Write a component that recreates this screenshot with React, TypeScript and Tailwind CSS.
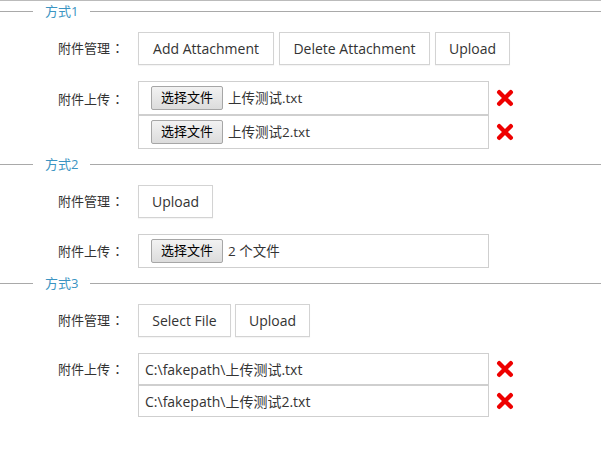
import React from "react";

const font = { fontFamily: '"Open Sans", "Noto Sans CJK SC", sans-serif' };

function Legend({ text }: { text: string }) {
  return (
    <div className="flex items-center h-5">
      <div className="w-[33px] h-px bg-[#a9a9a9]" />
      <div className="px-3 text-[13px] leading-5 text-[#3b94c2]">{text}</div>
      <div className="flex-1 h-px bg-[#a9a9a9]" />
    </div>
  );
}

function Label({ text }: { text: string }) {
  return (
    <div className="w-[138px] pl-[58px] text-[13px] text-[#333] whitespace-nowrap">
      {text}
      <span className="inline-block ml-[1px]" style={{ fontFamily: '"Noto Sans CJK JP", sans-serif' }}>
        ：
      </span>
    </div>
  );
}

function Btn({ text, w }: { text: string; w: string }) {
  return (
    <div
      className={`${w} h-[33px] flex items-center justify-center border border-[#d3d3d3] bg-white text-[14px] text-[#333] whitespace-nowrap shadow-[0_1px_1px_rgba(0,0,0,0.04)]`}
    >
      {text}
    </div>
  );
}

function XIcon() {
  return (
    <svg width="18" height="18" viewBox="0 0 18 18" className="ml-[7px]">
      <path d="M3.2 3.2 L14.8 14.8 M14.8 3.2 L3.2 14.8" stroke="#ee0000" strokeWidth="4.4" strokeLinecap="round" />
    </svg>
  );
}

function FileBox({ name, showX = true }: { name: string; showX?: boolean }) {
  return (
    <div className="flex items-center">
      <div className="w-[351px] h-[34px] border border-[#cfcfcf] flex items-center pl-[12px]">
        <div className="h-[24px] w-[72px] flex items-center justify-center border border-[#a6a6a6] rounded-[2px] bg-gradient-to-b from-[#f2f2f2] to-[#dcdcdc] text-[13px] text-black">
          选择文件
        </div>
        <div className="ml-[5px] text-[13.5px] text-[#333]">{name}</div>
      </div>
      {showX && <XIcon />}
    </div>
  );
}

function PathBox({ path }: { path: string }) {
  return (
    <div className="flex items-center">
      <div className="w-[351px] h-[32px] border border-[#cfcfcf] flex items-center pl-[6px] text-[14px] text-[#333]">
        {path}
      </div>
      <XIcon />
    </div>
  );
}

export default function App() {
  return (
    <div className="w-[601px] h-[462px] bg-white border-t border-[#bbbbbb] overflow-hidden" style={font}>
      <Legend text="方式1" />
      <div className="flex items-center mt-[11px]">
        <Label text="附件管理" />
        <div className="flex gap-[5px]">
          <Btn text="Add Attachment" w="w-[136px]" />
          <Btn text="Delete Attachment" w="w-[151px]" />
          <Btn text="Upload" w="w-[75px]" />
        </div>
      </div>
      <div className="flex mt-[16px]">
        <div className="pt-[8px]">
          <Label text="附件上传" />
        </div>
        <div className="flex flex-col">
          <FileBox name="上传测试.txt" />
          <FileBox name="上传测试2.txt" />
        </div>
      </div>
      <div className="mt-[5px]">
        <Legend text="方式2" />
      </div>
      <div className="flex items-center mt-[11px]">
        <Label text="附件管理" />
        <Btn text="Upload" w="w-[75px]" />
      </div>
      <div className="flex items-center mt-[16px]">
        <Label text="附件上传" />
        <FileBox name="2 个文件" showX={false} />
      </div>
      <div className="mt-[5px]">
        <Legend text="方式3" />
      </div>
      <div className="flex items-center mt-[11px]">
        <Label text="附件管理" />
        <div className="flex gap-[4px]">
          <Btn text="Select File" w="w-[93px]" />
          <Btn text="Upload" w="w-[75px]" />
        </div>
      </div>
      <div className="flex mt-[16px]">
        <div className="pt-[6px]">
          <Label text="附件上传" />
        </div>
        <div className="flex flex-col">
          <PathBox path="C:\fakepath\上传测试.txt" />
          <PathBox path="C:\fakepath\上传测试2.txt" />
        </div>
      </div>
    </div>
  );
}
